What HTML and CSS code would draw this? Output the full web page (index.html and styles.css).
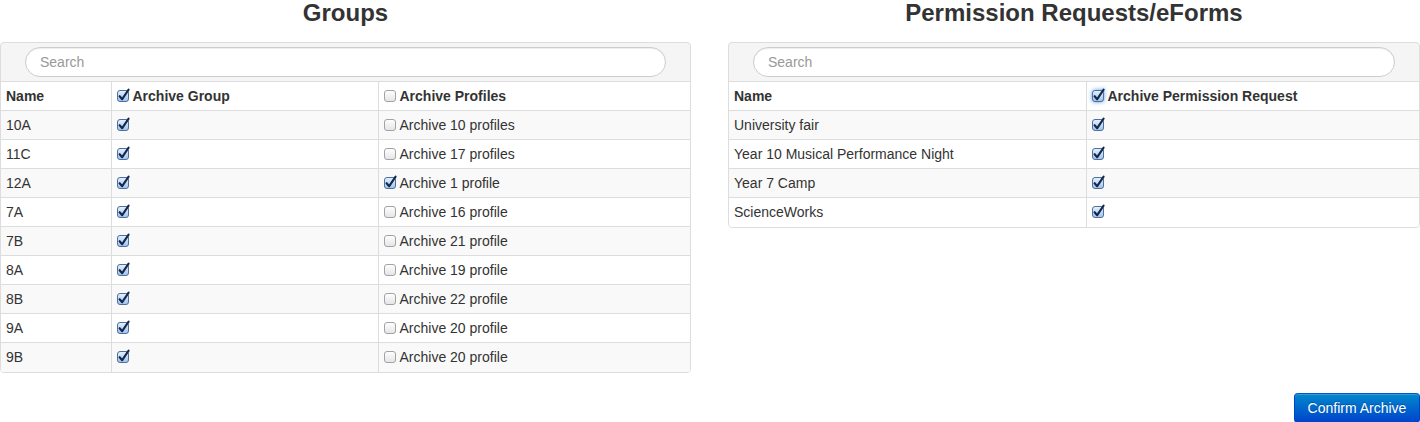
FILE: index.html
```html
<!DOCTYPE html>
<html>
<head>
<meta charset="utf-8">
<link rel="stylesheet" href="styles.css">
</head>
<body>
<svg class="defs" width="0" height="0" aria-hidden="true">
  <defs>
    <linearGradient id="g-off" x1="0" y1="0" x2="0" y2="1">
      <stop offset="0" stop-color="#ffffff"/>
      <stop offset="1" stop-color="#e4e4e4"/>
    </linearGradient>
    <linearGradient id="g-on" x1="0" y1="0" x2="0" y2="1">
      <stop offset="0" stop-color="#e6f1fd"/>
      <stop offset="1" stop-color="#9fc2ee"/>
    </linearGradient>
    <symbol id="cb-off" viewBox="0 0 14 14">
      <rect x="0.5" y="1.5" width="11" height="11" rx="2.5" fill="url(#g-off)" stroke="#a3a3a3"/>
    </symbol>
    <symbol id="cb-on" viewBox="0 0 14 14" overflow="visible">
      <rect x="0.5" y="1.5" width="11" height="11" rx="2.5" fill="url(#g-on)" stroke="#4f6f9c"/>
      <path d="M2.6 7.2 L5.2 10.2 L11.6 0.6" fill="none" stroke="#13284a" stroke-width="2.1" stroke-linecap="round" stroke-linejoin="round"/>
    </symbol>
  </defs>
</svg>

<div class="page">
  <section class="col">
    <h2 class="title">Groups</h2>
    <div class="panel">
      <div class="search-bar"><input class="search" type="text" placeholder="Search"></div>
      <table class="grid groups">
        <colgroup><col class="c-name1"><col class="c-group"><col></colgroup>
        <thead>
          <tr>
            <th>Name</th>
            <th><svg class="cb"><use href="#cb-on"/></svg>Archive Group</th>
            <th><svg class="cb"><use href="#cb-off"/></svg>Archive Profiles</th>
          </tr>
        </thead>
        <tbody>
          <tr><td>10A</td><td><svg class="cb"><use href="#cb-on"/></svg></td><td><svg class="cb"><use href="#cb-off"/></svg>Archive 10 profiles</td></tr>
          <tr><td>11C</td><td><svg class="cb"><use href="#cb-on"/></svg></td><td><svg class="cb"><use href="#cb-off"/></svg>Archive 17 profiles</td></tr>
          <tr><td>12A</td><td><svg class="cb"><use href="#cb-on"/></svg></td><td><svg class="cb"><use href="#cb-on"/></svg>Archive 1 profile</td></tr>
          <tr><td>7A</td><td><svg class="cb"><use href="#cb-on"/></svg></td><td><svg class="cb"><use href="#cb-off"/></svg>Archive 16 profile</td></tr>
          <tr><td>7B</td><td><svg class="cb"><use href="#cb-on"/></svg></td><td><svg class="cb"><use href="#cb-off"/></svg>Archive 21 profile</td></tr>
          <tr><td>8A</td><td><svg class="cb"><use href="#cb-on"/></svg></td><td><svg class="cb"><use href="#cb-off"/></svg>Archive 19 profile</td></tr>
          <tr><td>8B</td><td><svg class="cb"><use href="#cb-on"/></svg></td><td><svg class="cb"><use href="#cb-off"/></svg>Archive 22 profile</td></tr>
          <tr><td>9A</td><td><svg class="cb"><use href="#cb-on"/></svg></td><td><svg class="cb"><use href="#cb-off"/></svg>Archive 20 profile</td></tr>
          <tr><td>9B</td><td><svg class="cb"><use href="#cb-on"/></svg></td><td><svg class="cb"><use href="#cb-off"/></svg>Archive 20 profile</td></tr>
        </tbody>
      </table>
    </div>
  </section>

  <section class="col">
    <h2 class="title">Permission Requests/eForms</h2>
    <div class="panel">
      <div class="search-bar"><input class="search" type="text" placeholder="Search"></div>
      <table class="grid perms">
        <colgroup><col class="c-name2"><col></colgroup>
        <thead>
          <tr>
            <th>Name</th>
            <th><svg class="cb focus"><use href="#cb-on"/></svg>Archive Permission Request</th>
          </tr>
        </thead>
        <tbody>
          <tr><td>University fair</td><td><svg class="cb"><use href="#cb-on"/></svg></td></tr>
          <tr><td>Year 10 Musical Performance Night</td><td><svg class="cb"><use href="#cb-on"/></svg></td></tr>
          <tr><td>Year 7 Camp</td><td><svg class="cb"><use href="#cb-on"/></svg></td></tr>
          <tr><td>ScienceWorks</td><td><svg class="cb"><use href="#cb-on"/></svg></td></tr>
        </tbody>
      </table>
    </div>
  </section>
</div>

<div class="actions">
  <button class="btn-primary" type="button">Confirm Archive</button>
</div>
</body>
</html>
```

FILE: styles.css
```css
* { box-sizing: border-box; }

html, body {
  margin: 0;
  padding: 0;
  background: #ffffff;
}

body {
  font-family: "Liberation Sans", Helvetica, Arial, sans-serif;
  font-size: 14px;
  line-height: 20px;
  color: #333333;
}

.defs {
  position: absolute;
  width: 0;
  height: 0;
  overflow: hidden;
}

.page {
  display: grid;
  grid-template-columns: 691px 692px;
  column-gap: 37px;
  align-items: start;
}

.title {
  margin: 0 0 16px;
  font-size: 24px;
  line-height: 26px;
  font-weight: bold;
  text-align: center;
  color: #333333;
}

.panel {
  border: 1px solid #dddddd;
  border-radius: 4px;
  background: #f5f5f5;
  overflow: hidden;
}

.search-bar {
  padding: 4px 24px 4px 24px;
  height: 38px;
}

.search {
  display: block;
  width: 100%;
  height: 30px;
  margin: 0;
  padding: 4px 14px;
  border: 1px solid #cccccc;
  border-radius: 15px;
  background: #ffffff;
  box-shadow: inset 0 1px 1px rgba(0, 0, 0, 0.075);
  font-family: inherit;
  font-size: 14px;
  color: #555555;
  outline: none;
}

.search::placeholder { color: #999999; }

.grid {
  width: 100%;
  border-collapse: collapse;
  table-layout: fixed;
  background: #ffffff;
}

.c-name1 { width: 110px; }
.c-group { width: 267px; }
.c-name2 { width: 357px; }

.grid th,
.grid td {
  padding: 4px 5px;
  height: 29px;
  text-align: left;
  vertical-align: middle;
  border-top: 1px solid #dddddd;
  border-left: 1px solid #dddddd;
  white-space: nowrap;
}

.grid th:first-child,
.grid td:first-child { border-left: 0; }

.grid th { font-weight: bold; }

.grid tbody tr:nth-child(odd) td { background: #f9f9f9; }

.cb {
  display: inline-block;
  width: 14px;
  height: 14px;
  margin-right: 2px;
  vertical-align: -2px;
  overflow: visible;
}

.cb.focus {
  border-radius: 4px;
  filter: drop-shadow(0 0 2px rgba(70, 140, 230, 0.9));
}

.actions {
  display: flex;
  justify-content: flex-end;
  margin-top: 20px;
}

.btn-primary {
  min-width: 126px;
  height: 30px;
  padding: 4px 12px;
  border: 1px solid #0044cc;
  border-color: #0055cc #0044cc #003399;
  border-radius: 4px;
  background: linear-gradient(to bottom, #0088cc, #0044cc);
  color: #ffffff;
  font-family: inherit;
  font-size: 14px;
  line-height: 20px;
  text-align: center;
  text-shadow: 0 -1px 0 rgba(0, 0, 0, 0.25);
  box-shadow: inset 0 1px 0 rgba(255, 255, 255, 0.2), 0 1px 2px rgba(0, 0, 0, 0.05);
  cursor: pointer;
}
```
